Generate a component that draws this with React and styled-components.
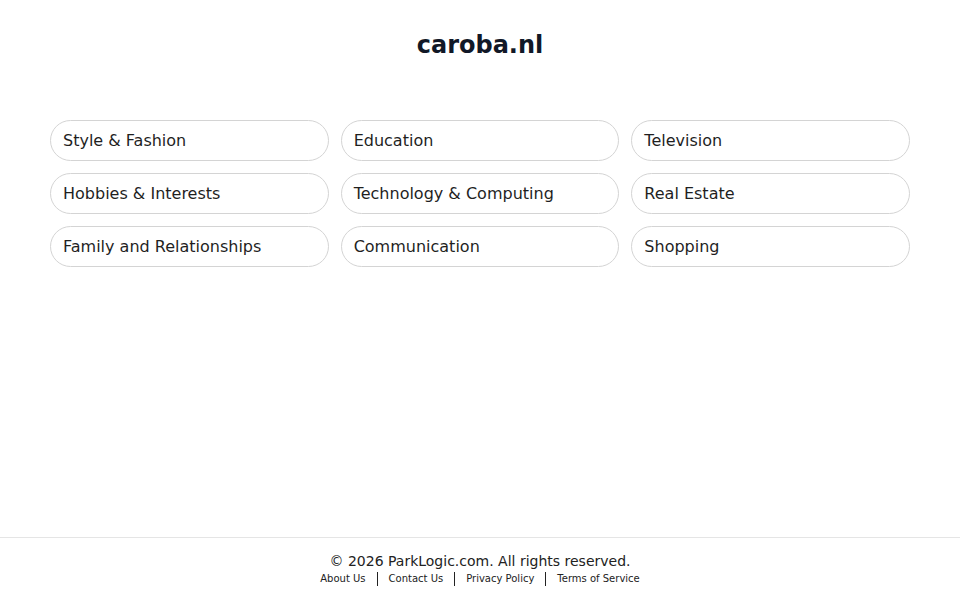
import React from 'react'
import styled, { createGlobalStyle } from 'styled-components';

const GlobalStyle = createGlobalStyle`
  html, body {
    margin: 0;
    padding: 0;
    background: #ffffff;
    font-family: "DejaVu Sans", sans-serif;
  }
  * { box-sizing: border-box; }
`;

const Page = styled.div`
  display: flex;
  flex-direction: column;
  min-height: 100vh;
`;

const Main = styled.main`
  flex: 1;
  padding: 0 50px;
`;

const Title = styled.h1`
  margin: 0;
  padding-top: 30px;
  height: 120px;
  text-align: center;
  font-size: 24px;
  line-height: 30px;
  font-weight: bold;
  color: #111827;
`;

const Grid = styled.div`
  display: grid;
  grid-template-columns: repeat(3, 1fr);
  gap: 12px;
`;

const Pill = styled.a`
  display: flex;
  align-items: center;
  height: 41px;
  padding: 0 12px;
  border: 1px solid #d4d4d4;
  border-radius: 21px;
  font-size: 16px;
  color: #1f1f1f;
  text-decoration: none;
`;

const Footer = styled.footer`
  border-top: 1px solid #e5e5e5;
  padding: 15px 0 14px;
  text-align: center;
  color: #222;
`;

const Copy = styled.div`
  font-size: 14px;
  line-height: 17px;
`;

const Links = styled.div`
  display: flex;
  justify-content: center;
  align-items: center;
  margin-top: 2px;
  font-size: 10px;
  line-height: 14px;
`;

const FootLink = styled.a`
  color: #222;
  text-decoration: none;
`;

const Sep = styled.span`
  display: inline-block;
  width: 1px;
  height: 14px;
  background: #222;
  margin: 0 11px;
`;

const topics = [
  'Style & Fashion', 'Education', 'Television',
  'Hobbies & Interests', 'Technology & Computing', 'Real Estate',
  'Family and Relationships', 'Communication', 'Shopping',
];

const footLinks = ['About Us', 'Contact Us', 'Privacy Policy', 'Terms of Service'];

const App = () => {
  return (
    <>
      <GlobalStyle />
      <Page>
        <Main>
          <Title>caroba.nl</Title>
          <Grid>
            {topics.map(t => <Pill key={t} href="#">{t}</Pill>)}
          </Grid>
        </Main>
        <Footer>
          <Copy>© 2026 ParkLogic.com. All rights reserved.</Copy>
          <Links>
            {footLinks.map((l, i) => (
              <React.Fragment key={l}>
                {i > 0 && <Sep />}
                <FootLink href="#">{l}</FootLink>
              </React.Fragment>
            ))}
          </Links>
        </Footer>
      </Page>
    </>
  )
}

export default App;
